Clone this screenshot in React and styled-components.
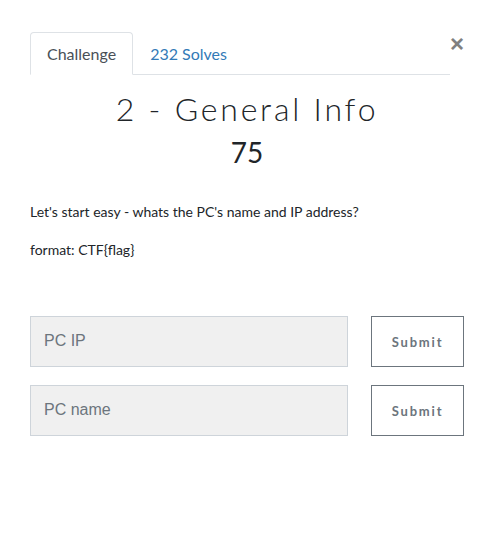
import React from 'react'
import styled, {createGlobalStyle} from 'styled-components'

const Global = createGlobalStyle`
  body {
    margin: 0;
    background: #fff;
    font-family: Lato, "Liberation Sans", sans-serif;
    color: #212529;
  }
`

const Page = styled.div`
  padding: 32px 30px 0 30px;
`

const TopBar = styled.div`
  display: flex;
  align-items: flex-start;
`

const Tabs = styled.div`
  display: flex;
  width: 420px;
  border-bottom: 1px solid #dee2e6;
`

const Tab = styled.div`
  height: 40px;
  padding: 0 16px 1px 16px;
  display: flex;
  align-items: center;
  font-size: 16px;
  margin-bottom: -1px;
  border: 1px solid ${p => (p.active ? '#dee2e6' : 'transparent')};
  border-bottom-color: ${p => (p.active ? '#fff' : 'transparent')};
  border-radius: 4px 4px 0 0;
  color: ${p => (p.active ? '#495057' : '#337ab7')};
  background: ${p => (p.active ? '#fff' : 'transparent')};
`

const Close = styled.div`
  margin-left: auto;
  margin-top: 0;
  margin-right: 0;
  font-family: "Liberation Sans", sans-serif;
  font-size: 24px;
  font-weight: 700;
  line-height: 24px;
  color: #808080;
`

const Title = styled.h2`
  margin: 15px 0 0 0;
  text-align: center;
  font-weight: 300;
  font-size: 32px;
  letter-spacing: 2.8px;
  line-height: 38px;
  color: #212529;
`

const Value = styled.h4`
  margin: 7px 0 0 0;
  text-align: center;
  font-weight: 400;
  font-size: 28px;
  line-height: 34px;
  color: #212529;
`

const Desc = styled.p`
  margin: ${p => p.top}px 0 0 0;
  font-size: 14px;
  line-height: 20px;
`

const Form = styled.div`
  margin-top: 56px;
  display: flex;
  flex-direction: column;
  gap: 18px;
  width: 434px;
`

const Row = styled.div`
  display: flex;
  justify-content: space-between;
`

const Input = styled.input`
  box-sizing: border-box;
  width: 318px;
  height: 51px;
  padding: 0 13px 2px 13px;
  background: #f0f0f0;
  border: 1px solid #ced4da;
  border-radius: 0;
  font-family: "Liberation Sans", sans-serif;
  font-size: 16px;
  &::placeholder {
    color: #6c757d;
  }
`

const Button = styled.button`
  box-sizing: border-box;
  width: 93px;
  height: 51px;
  background: #fff;
  border: 1px solid #6c757d;
  border-radius: 0;
  color: #6c757d;
  font-family: Lato, sans-serif;
  font-weight: 700;
  font-size: 13px;
  letter-spacing: 1.8px;
  padding: 0;
`

export default function App() {
  return (
    <>
      <Global />
      <Page>
        <TopBar>
          <Tabs>
            <Tab active>Challenge</Tab>
            <Tab>232 Solves</Tab>
          </Tabs>
          <Close>×</Close>
        </TopBar>
        <Title>2 - General Info</Title>
        <Value>75</Value>
        <Desc top={33}>Let's start easy - whats the PC's name and IP address?</Desc>
        <Desc top={18}>format: CTF{'{flag}'}</Desc>
        <Form>
          <Row>
            <Input placeholder="PC IP" />
            <Button>Submit</Button>
          </Row>
          <Row>
            <Input placeholder="PC name" />
            <Button>Submit</Button>
          </Row>
        </Form>
      </Page>
    </>
  )
}
